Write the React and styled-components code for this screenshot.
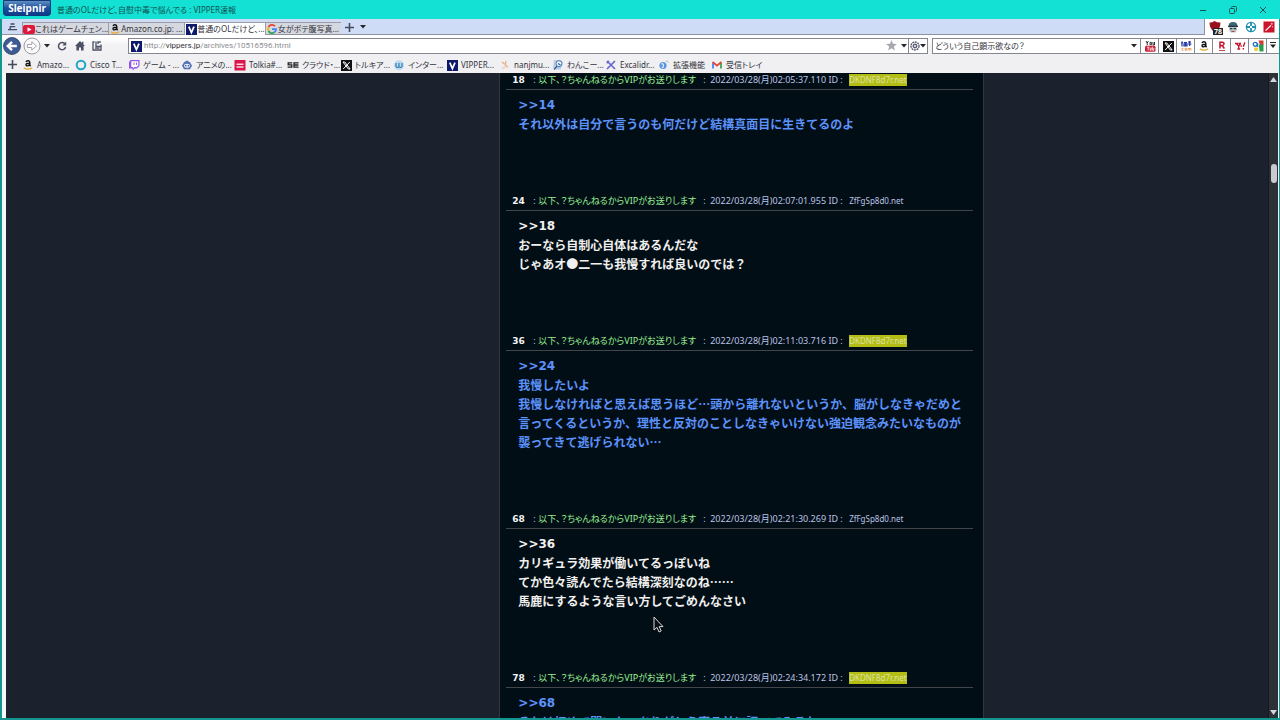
import React from "react";
import styled, { createGlobalStyle } from "styled-components";

const Global = createGlobalStyle`
  * { box-sizing: border-box; }
  body { margin: 0; background: #12e1d4; }
  button, input { font: inherit; color: inherit; margin: 0; padding: 0; border: 0; background: none; }
  button { display: inline-flex; align-items: center; justify-content: center; }
  a { color: inherit; text-decoration: none; }
  svg { display: block; flex: none; }
`;

const Window = styled.div`
  display: flex;
  flex-direction: column;
  height: 100vh;
  padding: 0 1px 2px 2px;
  background: #14958f;
  font: 9px/12px "Noto Sans", "Noto Sans CJK JP", sans-serif;
  font-feature-settings: "palt";
  color: #33343c;
  overflow: hidden;
`;

const TitleBar = styled.header`
  display: flex;
  align-items: center;
  height: 19px;
  margin: 0 -1px 0 -2px;
  padding-left: 3px;
  background: #12e1d4;
`;
const Brand = styled.button`
  && {
    align-self: flex-start;
    width: 48px;
    height: 16px;
    border: 1px solid #123a78;
    border-radius: 0 0 3px 3px;
    background: linear-gradient(#5f8fc4, #1c4f9c 50%, #0d3c8b);
    color: #fff;
    font-weight: 700;
    font-size: 10px;
  }
`;
const PageTitle = styled.h1`
  flex: 1;
  margin: 0 0 0 6px;
  font-size: 8px;
  font-weight: 400;
  color: #10514f;
`;
const WindowButtons = styled.div`
  display: flex;
  gap: 18px;
  padding-right: 11px;
  color: #105553;
`;
const WindowButton = styled.button`
  width: 12px;
  height: 12px;
`;

const TabRow = styled.div`
  display: flex;
  height: 16px;
  background: #fff;
`;
const TabStrip = styled.nav`
  flex: 1;
  display: flex;
  align-items: flex-end;
  background: #cfdcf6;
  border-bottom: 1px solid #8f93a0;
  border-right: 1px solid #8f93a0;
`;
const StripButton = styled.button`
  width: ${(p) => p.$w || 20}px;
  height: 14px;
`;
const Tab = styled.button`
  && {
    justify-content: flex-start;
    min-width: 76px;
    height: ${(p) => (p.$active ? 13 : 12)}px;
    margin-bottom: ${(p) => (p.$active ? -1 : 0)}px;
    border: 1px solid #9a9dab;
    border-width: 1px 0 0 1px;
    background: ${(p) => (p.$active ? "#fff" : "#d6d8df")};
    font-size: 8px;
    white-space: nowrap;
  }
  &:last-of-type { border-right-width: 1px; }
`;
const Extensions = styled.div`
  display: flex;
  align-items: center;
  gap: 4px;
  padding: 0 3px;
`;
const ExtensionButton = styled.button`
  position: relative;
  width: 14px;
  height: 14px;
`;
const Badge = styled.span`
  position: absolute;
  right: -1px;
  bottom: -1px;
  padding: 0 1px;
  background: #222;
  color: #fff;
  font-size: 7px;
  font-weight: 700;
  line-height: 7px;
`;

const NavRow = styled.div`
  display: flex;
  align-items: center;
  height: 21px;
  background: linear-gradient(#fff 3px, #f3f2f5 10px, #f0eff2);
`;
const NavButton = styled.button`
  width: ${(p) => p.$w || 18}px;
  height: 20px;
`;
const AddressBar = styled.form`
  flex: 1;
  display: flex;
  align-items: center;
  height: 16px;
  margin-left: 22px;
  padding-left: 1px;
  border: 1px solid #85878f;
  background: #fff;
`;
const UrlText = styled.a`
  flex: 1;
  padding-left: 2px;
  font-family: Roboto, sans-serif;
  font-size: 8px;
  color: #8d8d92;
  b { font-weight: 400; color: #303038; }
`;
const BarButton = styled.button`
  width: ${(p) => p.$w || 18}px;
  height: 14px;
`;
const GearButton = styled(BarButton)`
  && { border-left: 1px solid #85878f; }
`;
const SearchBar = styled.form`
  display: flex;
  align-items: center;
  width: 347px;
  height: 16px;
  margin-left: 4px;
  border: 1px solid #85878f;
  border-right: 0;
  background: #fff;
`;
const SearchInput = styled.input`
  && {
    flex: 1;
    min-width: 0;
    padding-left: 2px;
    font-size: 8px;
  }
`;
const EngineButton = styled.button`
  && {
    width: ${(p) => p.$w || 18}px;
    height: 14px;
    border-left: 1px solid #85878f;
  }
`;

const BookmarkBar = styled.nav`
  display: flex;
  align-items: center;
  height: 17px;
  font-size: 8px;
  background: #f0eff2;
`;
const Bookmark = styled.a`
  display: flex;
  align-items: center;
  gap: 3px;
  width: 53px;
  white-space: nowrap;
`;

const Viewport = styled.div`
  flex: 1;
  min-height: 0;
  display: flex;
  padding-left: 4px;
  background: #f4f8f8;
`;
const Page = styled.main`
  position: relative;
  flex: 1;
  display: flex;
  background: #1b222d;
  overflow: hidden;
`;
const Margin = styled.div`
  flex: ${(p) => p.$grow};
`;
const Column = styled.section`
  width: 485px;
  padding: 0 10px 0 6px;
  border: 1px solid #30353f;
  border-width: 0 1px;
  background: #020e16;
`;
const PostHead = styled.header`
  display: flex;
  align-items: center;
  height: 17px;
  padding: 0 0 2px 6px;
  border-bottom: 1px solid #42454a;
  white-space: pre;
  color: #bcc3e4;
`;
const PostNumber = styled.b`
  width: 21px;
  font-family: "DejaVu Sans", sans-serif;
  color: #f4f4f4;
`;
const PostName = styled.span`
  width: 165px;
  color: #98ee92;
`;
const PostMeta = styled.span`
  width: 146px;
`;
const PostId = styled.a`
  font-size: 8px;
  background: ${(p) => (p.$marked ? "#b3bd14" : "transparent")};
  color: ${(p) => (p.$marked ? "#dbe2a4" : "#bcc3e4")};
`;
const PostBody = styled.div`
  padding: 6px 6px 61px 12px;
  font: 700 12px/19px "Noto Sans CJK JP", sans-serif;
  font-feature-settings: normal;
  color: ${(p) => (p.$own ? "#5c92fb" : "#f1f0ee")};
  p { margin: 0; white-space: nowrap; }
`;
const ReplyLink = styled.a`
  display: block;
  font-family: "DejaVu Sans", sans-serif;
  line-height: 18px;
`;

const ScrollTrack = styled.div`
  display: flex;
  flex-direction: column;
  align-items: center;
  width: 10px;
  margin-right: 1px;
  background: #2c3136;
  border-left: 1px solid #14181f;
`;
const ScrollButton = styled.button`
  width: 9px;
  height: 12px;
`;
const ScrollSpace = styled.div`
  flex: ${(p) => p.$grow};
`;
const ScrollThumb = styled.div`
  width: 6px;
  height: 19px;
  border-radius: 3px;
  background: #c9c9cf;
`;
const Pointer = styled.svg`
  position: absolute;
  left: 647px;
  top: 543px;
`;

const Caret = () => (
  <svg width="6" height="4" viewBox="0 0 6 4"><path d="M0 0h6L3 3.6z" fill="#26262c" /></svg>
);
const Plus = () => (
  <svg width="9" height="9" viewBox="0 0 9 9"><path d="M4.5 0v9M0 4.5h9" stroke="#454a5e" strokeWidth="1.6" /></svg>
);

const ICONS = {
  youtube: <><rect x="0" y="2" width="12" height="9" rx="2" fill="#e0163c" /><path d="M4.5 4.2v4.6L8.6 6.5z" fill="#fff" /></>,
  amazon: <><path d="M4 2.9C4.6 1.3 7.8 1.2 7.8 3.5V6.2l.8 1M7.7 4.2C4.9 4.2 3.8 4.9 4 6 4.2 7.5 7.3 7 7.7 5.4" fill="none" stroke="#111" strokeWidth="1.4" /><path d="M1.8 8.8Q6 11.6 10.2 8.8" fill="none" stroke="#e9a52a" strokeWidth="1.2" /></>,
  v: <><rect x="1" y="1" width="11" height="11" fill="#0d1a6a" /><path d="M3.8 3.6 6.4 9.6 9 3.6" fill="none" stroke="#fff" strokeWidth="1.7" /></>,
  google: <g fill="none" strokeWidth="1.8"><path d="M9 3.2A4 4 0 0 0 2.5 4" stroke="#e54335" /><path d="M2.5 4a4 4 0 0 0 0 4" stroke="#f0b90c" /><path d="M2.5 8a4 4 0 0 0 6 1.3" stroke="#34a353" /><path d="M8.5 9.3A4 4 0 0 0 10 6.2H6" stroke="#4285f4" /></g>,
  cisco: <circle cx="6" cy="6" r="4.3" fill="none" stroke="#1fa5c5" strokeWidth="2" />,
  twitch: <><path d="M2.5 1h9v6L8.8 9.6H6.8L4.6 11.6v-2H1V3.2z" fill="#9255e8" /><path d="M3.3 2.2h7v4.4L8.7 8H6.4L5 9.3V8H3.3z" fill="#fff" /><path d="M6 3.5v2.4M8.5 3.5v2.4" stroke="#9255e8" /></>,
  anime: <><path d="M1 6.8 3 3.3 6 1.4l3 1.9 2 3.5-2 3.5H3z" fill="#5272b5" /><ellipse cx="6" cy="6.8" rx="3" ry="2" fill="#e3ecfa" /><circle cx="4.7" cy="6.8" r=".8" fill="#30508c" /><circle cx="7.4" cy="6.8" r=".8" fill="#30508c" /></>,
  tolkia: <><rect x=".5" y="1" width="11" height="10.5" fill="#d9164b" /><path d="M2.5 5.2h7M2.5 8h7" stroke="#ffd4de" strokeWidth="1.4" /></>,
  se: <g fill="none" stroke="#222" strokeWidth="1.3"><path d="M5.2 3.9H1.2v2h3.6v2.3H.6" /><path d="M11.6 3.9H7v4.3h4.6M7 6h4.4" /></g>,
  x: <><rect x="1" y="1" width="11" height="11" fill="#111" /><path d="M3 3h1.8l5.3 7H8.3zM9.8 3 3.2 10" fill="none" stroke="#fff" strokeWidth="1" /></>,
  internet: <><circle cx="6" cy="6.3" r="5" fill="#bdd9ec" /><path d="M3 4v3.5q1.5 2 3 0V4v3.5q1.5 2 3 0V4" fill="none" stroke="#2d7fb4" strokeWidth="1.2" /></>,
  nanj: <><path d="M3 3l2.5 2M7 2 6.2 6l3 2" fill="none" stroke="#e6b08c" strokeWidth="1.3" /><path d="M3 9.5 7 7.8" stroke="#ecc8a8" strokeWidth="1.2" /></>,
  wanko: <><path d="M2 1h7l2 2.4-2.4 7H4L1 9z" fill="#b9cfe6" /><circle cx="7" cy="4.7" r="3" fill="#eef5ff" stroke="#4677b0" /><path d="M2 10.5 5 7.2M6 4.5 8.5 6" stroke="#3a5f94" strokeWidth="1.3" /></>,
  excali: <path d="M2 2 10 10M10 2 2 10M1.8 4.2 4 2" fill="none" stroke="#6965cf" strokeWidth="1.7" />,
  ext: <><circle cx="5" cy="6.5" r="3.6" fill="#5b96dc" /><path d="M3.4 5.1q1.8-1.3 2 1.2T3.8 8.6" fill="none" stroke="#d9ebff" strokeWidth="1.3" /><path d="M7.8 2.2q2.2-.7 2.5 1.4" fill="none" stroke="#a9b3c4" /></>,
  gmail: <g fill="none" strokeWidth="1.8"><path d="M2 9.5V3.5" stroke="#4285f4" /><path d="M10 9.5V3.5" stroke="#34a853" /><path d="M1.6 3 6 6.6 10.4 3" stroke="#ea4335" /></g>,
  ytSearch: <><path d="M2 1l1.2 2 1.2-2M3.2 3v2.2M6 2.4v2.4h1.4V2.4zM9 2v3h1.5V2" fill="none" stroke="#333" strokeWidth="1" /><rect x="1" y="5.7" width="10.5" height="6" rx="1.5" fill="#c8233a" /><path d="M3 7.2h2.4M4.2 7.2v3.3M6.2 7.6v2.7h1V7.6M8.6 6.8v3.5h1.2V8" fill="none" stroke="#ffdce0" strokeWidth=".9" /></>,
  kakaku: <><path d="M2 1.5v5M1 3.3l2-1M4 2.5h3M4 6h3V3.8H4zM5.5 2.5v3.4M8 2h3M9.7 1v5M8 4h3.4" fill="none" stroke="#2034a4" strokeWidth="1.2" /><path d="M3.5 8.3H2v2h1.5M5 8.3h1.6v2H5zM8 10.5v-2h3v2M9.5 8.5v2" fill="none" stroke="#e39a5a" strokeWidth=".9" /></>,
  rakuten: <><path d="M4 8.5V2.2h2.2Q8.2 2.4 8 4T6 5.5H4M6 5.5 8.4 8.5" fill="none" stroke="#c0122a" strokeWidth="1.5" /><path d="M3 10.5h6" stroke="#d34455" /></>,
  yahoo: <path d="M1 3.5h3.5M7 3.5H4.8M2.5 3.6 4.7 6.2 6.6 3.6M4.7 6v3M3.4 9h2.8M10.8 2.4 9.4 6.7M8.6 8.8h1.4M7.2 5.2v1.6" fill="none" stroke="#c5152e" strokeWidth="1.4" />,
  gsearch: <><path d="M6.5 .5h5v4.5H8z" fill="#d43c35" /><path d="M6.8 4.6h4.7V11.5H7.6z" fill="#279d4d" /><circle cx="3.2" cy="4.3" r="1.9" fill="none" stroke="#2678c0" strokeWidth="1.4" /><circle cx="4" cy="9.3" r="2" fill="#e9cf35" /><path d="M5.6 3v4" stroke="#2678c0" strokeWidth="1.2" /></>,
  shield: <path d="M.5 1.5Q3 1.7 5.5 0 8 1.7 11.5 1.5 11.5 8 6 11.5.5 8 .5 1.5z" fill="#98121d" />,
  agent: <><path d="M1.5 5.4Q1.5 1 6 1 10.5 1 10.5 5.4z" fill="#3c6472" /><path d="M2 5h8v4L8.5 11.5h-5L2 9z" fill="#b8c4c8" /><path d="M1 5.4h10M3 7.7h2.4M6.6 7.7h2.4" stroke="#23343c" strokeWidth="1.3" /><path d="M4.5 10.5h3" stroke="#b04448" /></>,
  target: <g fill="none" stroke="#1f8eae"><circle cx="6" cy="6" r="4.6" strokeWidth="1.3" /><path d="M6 2v3M6 7v3M2 6h3M7 6h3" strokeWidth="1.8" /></g>,
  wand: <><rect x=".5" y=".5" width="11" height="11" fill="#c9142b" /><path d="M2.5 9.6 8 4.4" stroke="#fff" strokeWidth="1.3" /><path d="M8.8 1.8v2M7.8 2.8h2M9.6 5v1.4" stroke="#ffc5cb" strokeWidth=".8" /></>,
};
const Icon = ({ name }) => (
  <svg width="12" height="12" viewBox="0 0 12 12" aria-hidden="true">{ICONS[name]}</svg>
);

const tabs = [
  ["youtube", "これはゲームチェン..."],
  ["amazon", "Amazon.co.jp: ..."],
  ["v", "普通のOLだけど、...", true],
  ["google", "女がボテ腹写真..."],
];
const bookmarks = [
  ["amazon", "Amazo..."], ["cisco", "Cisco T..."], ["twitch", "ゲーム - ..."], ["anime", "アニメの..."],
  ["tolkia", "Tolkia#..."], ["se", "クラウド・..."], ["x", "トルキア..."], ["internet", "インター..."],
  ["v", "VIPPER..."], ["nanj", "nanjmu..."], ["wanko", "わんこー..."], ["excali", "Excalidr..."],
  ["ext", "拡張機能"], ["gmail", "受信トレイ"],
];
const engines = [["ytSearch", "YouTube"], ["x", "X"], ["kakaku", "価格.com"], ["amazon", "Amazon"], ["rakuten", "楽天"], ["yahoo", "Yahoo!"], ["gsearch", "Google"]];
const extensions = [["shield", "uBlock", "78"], ["agent", "User agent"], ["target", "Target"], ["wand", "Wand"]];

const posts = [
  { n: 18, time: "2022/03/28(月)02:05:37.110", own: true, to: 14, lines: ["それ以外は自分で言うのも何だけど結構真面目に生きてるのよ"] },
  { n: 24, time: "2022/03/28(月)02:07:01.955", to: 18, lines: ["おーなら自制心自体はあるんだな", "じゃあオ●二一も我慢すれば良いのでは？"] },
  { n: 36, time: "2022/03/28(月)02:11:03.716", own: true, to: 24, lines: ["我慢したいよ", "我慢しなければと思えば思うほど…頭から離れないというか、脳がしなきゃだめと", "言ってくるというか、理性と反対のことしなきゃいけない強迫観念みたいなものが", "襲ってきて逃げられない…"] },
  { n: 68, time: "2022/03/28(月)02:21:30.269", to: 36, lines: ["カリギュラ効果が働いてるっぽいね", "てか色々読んでたら結構深刻なのね……", "馬鹿にするような言い方してごめんなさい"] },
  { n: 78, time: "2022/03/28(月)02:24:34.172", own: true, to: 68, lines: ["それは初めて聞いたーありがとう寝る前に調べてみるね"] },
];

const Post = ({ post }) => (
  <article>
    <PostHead>
      <PostNumber>{post.n}</PostNumber>
      <span>: </span>
      <PostName>以下、？ちゃんねるからVIPがお送りします</PostName>
      <PostMeta>{`:  ${post.time} ID :`}</PostMeta>
      <PostId href="#id" $marked={post.own}>{post.own ? "DKDNF8d7r.net" : "ZfFgSp8d0.net"}</PostId>
    </PostHead>
    <PostBody $own={post.own}>
      <ReplyLink href={`#${post.to}`}>{`>>${post.to}`}</ReplyLink>
      {post.lines.map((line) => <p key={line}>{line}</p>)}
    </PostBody>
  </article>
);

export default function App() {
  return (
    <>
      <Global />
      <Window>
        <TitleBar>
          <Brand>Sleipnir</Brand>
          <PageTitle>普通のOLだけど、自慰中毒で悩んでる : VIPPER速報</PageTitle>
          <WindowButtons>
            <WindowButton aria-label="Minimize"><svg width="8" height="8"><path d="M1 4.5h6" stroke="currentColor" /></svg></WindowButton>
            <WindowButton aria-label="Restore"><svg width="8" height="8" fill="none" stroke="currentColor"><rect x=".5" y="2.5" width="5" height="5" rx="1" /><path d="M2.5 1.5Q2.5.5 3.5.5h3q1 0 1 1v3q0 1-1 1" /></svg></WindowButton>
            <WindowButton aria-label="Close"><svg width="8" height="8"><path d="M1 1l6 6M7 1 1 7" stroke="currentColor" /></svg></WindowButton>
          </WindowButtons>
        </TitleBar>

        <TabRow>
          <TabStrip>
            <StripButton aria-label="Tab list"><svg width="9" height="8" viewBox="0 0 9 8"><path d="M2.5 1h4M1.8 3.6h5.4M2.2 3.6V6M0 6.6h9" fill="none" stroke="#454a5e" strokeWidth="1.4" /></svg></StripButton>
            {tabs.map(([icon, label, active]) => (
              <Tab key={icon} $active={active}><Icon name={icon} /><span>{label}</span></Tab>
            ))}
            <StripButton $w={18} aria-label="New tab"><Plus /></StripButton>
            <StripButton $w={8} aria-label="Closed tabs"><Caret /></StripButton>
          </TabStrip>
          <Extensions>
            {extensions.map(([icon, label, badge]) => (
              <ExtensionButton key={icon} aria-label={label}><Icon name={icon} />{badge && <Badge>{badge}</Badge>}</ExtensionButton>
            ))}
          </Extensions>
        </TabRow>

        <NavRow>
          <NavButton $w={20} aria-label="Back">
            <svg width="18" height="18" viewBox="0 0 18 18"><circle cx="9" cy="9" r="8.4" fill="#3d5c96" stroke="#33486f" /><path d="M13.8 9H5M9 4.8 4.8 9 9 13.2" fill="none" stroke="#fff" strokeWidth="2.4" /></svg>
          </NavButton>
          <NavButton $w={20} aria-label="Forward">
            <svg width="18" height="18" viewBox="0 0 18 18"><circle cx="9" cy="9" r="8" fill="#fafafa" stroke="#9c9ca3" /><path d="M4.3 7.5h4.5V4.8L13.4 9l-4.6 4.2v-2.7H4.3z" fill="#fff" stroke="#a5a5ac" /></svg>
          </NavButton>
          <NavButton $w={10} aria-label="History"><Caret /></NavButton>
          <NavButton $w={20} aria-label="Reload">
            <svg width="10" height="10" viewBox="0 0 10 10"><path d="M7.8 2.8A3.6 3.6 0 1 0 8.6 6" fill="none" stroke="#4c5062" strokeWidth="1.5" /><path d="M9.2.5v4H5.4z" fill="#4c5062" /></svg>
          </NavButton>
          <NavButton $w={16} aria-label="Home">
            <svg width="10" height="10" viewBox="0 0 10 10"><path d="M5 0 0 5h1.4v4.6H4V6.5h2v3.1h2.6V5H10L8.4 3.4V.8H7v1.3z" fill="#4c5062" /></svg>
          </NavButton>
          <NavButton aria-label="Save page">
            <svg width="10" height="10" viewBox="0 0 10 10"><path d="M2.5 1H1v8h8V3.4M4 .5v5h4.8M8.8 1H6v2M3 7.2h4.5" fill="none" stroke="#4c5062" strokeWidth="1.3" /></svg>
          </NavButton>
          <AddressBar>
            <Icon name="v" />
            <UrlText href="#top">http://<b>vippers.jp</b>/archives/10516596.html</UrlText>
            <BarButton type="button" aria-label="Favorite"><svg width="11" height="11" viewBox="0 0 12 12"><path d="M6 0l1.6 4.2 4.4.2-3.5 2.8 1.2 4.3L6 9.1l-3.7 2.4 1.2-4.3L0 4.4l4.4-.2z" fill="#a7a8ad" /></svg></BarButton>
            <BarButton type="button" $w={8} aria-label="Address list"><Caret /></BarButton>
            <GearButton type="button" $w={19} aria-label="Page settings">
              <svg width="10" height="10" viewBox="0 0 10 10" fill="none" stroke="#5a6078"><circle cx="5" cy="5" r="4" strokeWidth="1.4" strokeDasharray="2 .6" /><circle cx="5" cy="5" r="1.7" strokeWidth="1.5" /></svg>
              <Caret />
            </GearButton>
          </AddressBar>
          <SearchBar>
            <SearchInput aria-label="Search" defaultValue="どういう自己顕示欲なの？" />
            <BarButton type="button" $w={12} aria-label="Search history"><Caret /></BarButton>
            {engines.map(([icon, label]) => (
              <EngineButton type="button" key={label} aria-label={label}><Icon name={icon} /></EngineButton>
            ))}
            <EngineButton type="button" $w={13} aria-label="More engines"><svg width="6" height="7"><path d="M0 .5h6" stroke="#222" /><path d="M0 2.5h6L3 6z" fill="#222" /></svg></EngineButton>
          </SearchBar>
        </NavRow>

        <BookmarkBar>
          <StripButton aria-label="Add bookmark"><Plus /></StripButton>
          {bookmarks.map(([icon, label]) => (
            <Bookmark key={label} href="#bookmark"><Icon name={icon} /><span>{label}</span></Bookmark>
          ))}
        </BookmarkBar>

        <Viewport>
          <Page>
            <Margin $grow={494} />
            <Column>{posts.map((post) => <Post key={post.n} post={post} />)}</Column>
            <Margin $grow={284} />
            <Pointer width="12" height="18" viewBox="0 0 12 18"><path d="M1 1v13l3-2.6L6 16l2.2-1-2-4.4H10z" fill="#0a0f14" stroke="#d8d8d8" /></Pointer>
          </Page>
          <ScrollTrack>
            <ScrollButton aria-label="Scroll up"><svg width="7" height="5"><path d="M0 5h7L3.5 0z" fill="#d6d2da" /></svg></ScrollButton>
            <ScrollSpace $grow={79} />
            <ScrollThumb />
            <ScrollSpace $grow={523} />
            <ScrollButton aria-label="Scroll down"><svg width="7" height="5"><path d="M0 0h7L3.5 5z" fill="#d6d2da" /></svg></ScrollButton>
          </ScrollTrack>
        </Viewport>
      </Window>
    </>
  );
}
